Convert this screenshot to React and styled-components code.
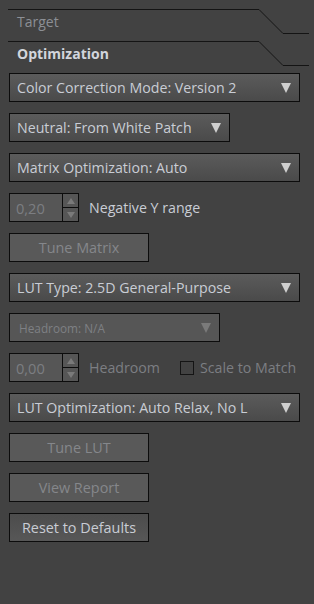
import React from 'react';
import styled, { createGlobalStyle } from 'styled-components';

const GlobalStyle = createGlobalStyle`
  html, body {
    margin: 0;
    padding: 0;
    background: #424242;
  }
  body {
    font-family: "Open Sans", "Noto Sans", sans-serif;
  }
`;

const Panel = styled.div`
  width: 314px;
  height: 604px;
  box-sizing: border-box;
  padding: 9px 0 0 9px;
  background: #424242;
  display: flex;
  flex-direction: column;
`;

const TabRow = styled.div`
  display: flex;
  height: 32px;
  margin-left: -1px;
`;

const TabLabel = styled.div`
  flex: 0 0 251px;
  border-top: 1px solid #141414;
  box-sizing: border-box;
  padding: 2px 0 0 9px;
  font-size: 14px;
  font-weight: ${(p) => (p.active ? 700 : 400)};
  color: ${(p) => (p.active ? '#d2d5dc' : '#8c8f95')};
`;

const TabEdge = styled.svg`
  flex: 0 0 50px;
  height: 32px;
`;

const Controls = styled.div`
  display: flex;
  flex-direction: column;
  gap: 11px;
`;

const Row = styled.div`
  display: flex;
  align-items: center;
  height: 29px;
`;

const Select = styled.div`
  width: ${(p) => p.w}px;
  height: 29px;
  box-sizing: border-box;
  border: 1px solid #0c0c0c;
  display: flex;
  align-items: center;
  justify-content: space-between;
  padding: 0 7px 0 ${(p) => (p.small ? 9 : 7)}px;
  background: ${(p) =>
    p.disabled ? '#565656' : 'linear-gradient(#5b5b5b, #4a4a4a)'};
  color: ${(p) => (p.disabled ? '#7e8084' : '#c9cdd5')};
  font-size: ${(p) => (p.small ? '11.8px' : '14.2px')};
`;

const Arrow = styled.span`
  width: 0;
  height: 0;
  border-left: 5px solid transparent;
  border-right: 5px solid transparent;
  border-top: 10px solid ${(p) => (p.disabled ? '#7a7a7a' : '#d0d0d0')};
  margin-right: 1px;
`;

const Spin = styled.div`
  width: 70px;
  height: 29px;
  box-sizing: border-box;
  border: 1px solid #0c0c0c;
  display: flex;
  background: #565656;
`;

const SpinValue = styled.div`
  flex: 1;
  display: flex;
  align-items: center;
  padding-left: 6px;
  font-size: 14.6px;
  color: #7c7e82;
`;

const SpinArrows = styled.div`
  width: 15px;
  border-left: 1px solid #0c0c0c;
  display: flex;
  flex-direction: column;
`;

const SpinBtn = styled.div`
  flex: 1;
  display: flex;
  align-items: center;
  justify-content: center;
  & + & {
    border-top: 1px solid #0c0c0c;
  }
  &::after {
    content: '';
    border-left: 4px solid transparent;
    border-right: 4px solid transparent;
    ${(p) => (p.up ? 'border-bottom' : 'border-top')}: 6px solid #7a7a7a;
  }
`;

const Label = styled.span`
  margin-left: ${(p) => p.ml || 10}px;
  font-size: 14.2px;
  color: ${(p) => (p.disabled ? '#7c7e82' : '#c9cdd5')};
`;

const Check = styled.span`
  width: 14px;
  height: 14px;
  box-sizing: border-box;
  border: 1px solid #141414;
  margin-left: 20px;
`;

const Button = styled.div`
  width: 140px;
  height: 29px;
  box-sizing: border-box;
  border: 1px solid #0c0c0c;
  display: flex;
  align-items: center;
  justify-content: center;
  font-size: 14.4px;
  background: ${(p) =>
    p.disabled ? '#595959' : 'linear-gradient(#4c4c4c, #575757)'};
  color: ${(p) => (p.disabled ? '#85878b' : '#c9cdd5')};
`;

const Tab = ({ label, active }) => (
  <TabRow>
    <TabLabel active={active}>{label}</TabLabel>
    <TabEdge viewBox="0 0 50 32">
      <polyline
        points="0,0.5 24,24.5 50,24.5"
        fill="none"
        stroke="#141414"
        strokeWidth="1"
      />
    </TabEdge>
  </TabRow>
);

const SelectBox = ({ w, text, disabled, small }) => (
  <Select w={w} disabled={disabled} small={small}>
    <span>{text}</span>
    <Arrow disabled={disabled} />
  </Select>
);

const SpinBox = ({ value }) => (
  <Spin>
    <SpinValue>{value}</SpinValue>
    <SpinArrows>
      <SpinBtn up />
      <SpinBtn />
    </SpinArrows>
  </Spin>
);

const App = () => (
  <>
    <GlobalStyle />
    <Panel>
      <Tab label="Target" />
      <Tab label="Optimization" active />
      <Controls>
        <SelectBox w={291} text="Color Correction Mode: Version 2" />
        <SelectBox w={221} text="Neutral: From White Patch" />
        <SelectBox w={291} text="Matrix Optimization: Auto" />
        <Row>
          <SpinBox value="0,20" />
          <Label>Negative Y range</Label>
        </Row>
        <Button disabled>Tune Matrix</Button>
        <SelectBox w={291} text="LUT Type: 2.5D General-Purpose" />
        <SelectBox w={211} text="Headroom: N/A" disabled small />
        <Row>
          <SpinBox value="0,00" />
          <Label disabled>Headroom</Label>
          <Check />
          <Label disabled ml={6}>Scale to Match</Label>
        </Row>
        <SelectBox w={291} text="LUT Optimization: Auto Relax, No L" />
        <Button disabled>Tune LUT</Button>
        <Button disabled>View Report</Button>
        <Button>Reset to Defaults</Button>
      </Controls>
    </Panel>
  </>
);

export default App;
